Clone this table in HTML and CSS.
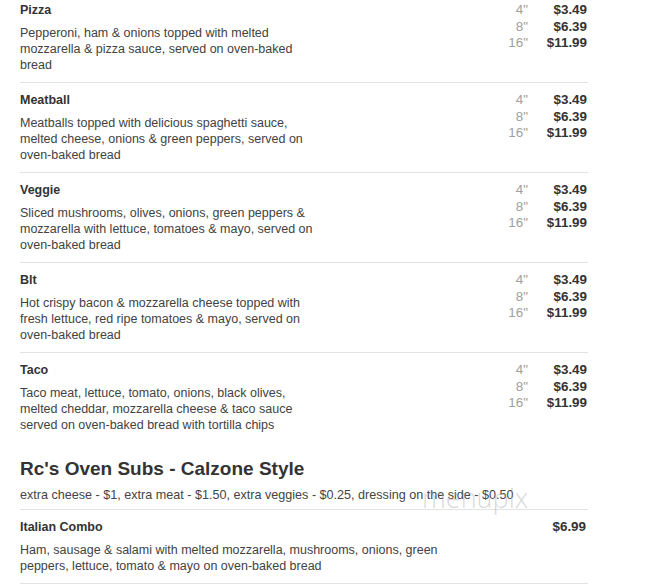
FILE: index.html
```html
<!DOCTYPE html>
<html>
<head>
<meta charset="utf-8">
<link rel="stylesheet" href="styles.css">
</head>
<body>
<div class="menu">
  <div class="list">
    <div class="item">
      <div class="info">
        <div class="name">Pizza</div>
        <div class="desc">Pepperoni, ham &amp; onions topped with melted mozzarella &amp; pizza sauce, served on oven-baked bread</div>
      </div>
      <div class="prices">
        <span class="size">4"</span><span class="price">$3.49</span>
        <span class="size">8"</span><span class="price">$6.39</span>
        <span class="size">16"</span><span class="price">$11.99</span>
      </div>
    </div>
    <div class="item">
      <div class="info">
        <div class="name">Meatball</div>
        <div class="desc">Meatballs topped with delicious spaghetti sauce, melted cheese, onions &amp; green peppers, served on oven-baked bread</div>
      </div>
      <div class="prices">
        <span class="size">4"</span><span class="price">$3.49</span>
        <span class="size">8"</span><span class="price">$6.39</span>
        <span class="size">16"</span><span class="price">$11.99</span>
      </div>
    </div>
    <div class="item">
      <div class="info">
        <div class="name">Veggie</div>
        <div class="desc">Sliced mushrooms, olives, onions, green peppers &amp; mozzarella with lettuce, tomatoes &amp; mayo, served on oven-baked bread</div>
      </div>
      <div class="prices">
        <span class="size">4"</span><span class="price">$3.49</span>
        <span class="size">8"</span><span class="price">$6.39</span>
        <span class="size">16"</span><span class="price">$11.99</span>
      </div>
    </div>
    <div class="item">
      <div class="info">
        <div class="name">Blt</div>
        <div class="desc">Hot crispy bacon &amp; mozzarella cheese topped with fresh lettuce, red ripe tomatoes &amp; mayo, served on oven-baked bread</div>
      </div>
      <div class="prices">
        <span class="size">4"</span><span class="price">$3.49</span>
        <span class="size">8"</span><span class="price">$6.39</span>
        <span class="size">16"</span><span class="price">$11.99</span>
      </div>
    </div>
    <div class="item">
      <div class="info">
        <div class="name">Taco</div>
        <div class="desc">Taco meat, lettuce, tomato, onions, black olives, melted cheddar, mozzarella cheese &amp; taco sauce served on oven-baked bread with tortilla chips</div>
      </div>
      <div class="prices">
        <span class="size">4"</span><span class="price">$3.49</span>
        <span class="size">8"</span><span class="price">$6.39</span>
        <span class="size">16"</span><span class="price">$11.99</span>
      </div>
    </div>
  </div>

  <div class="section-head">
    <h2 class="section-title">Rc's Oven Subs - Calzone Style</h2>
    <div class="section-note">extra cheese - $1, extra meat - $1.50, extra veggies - $0.25, dressing on the side - $0.50</div>
    <div class="watermark">menupix</div>
  </div>

  <div class="list">
    <div class="item single">
      <div class="info wide">
        <div class="name">Italian Combo</div>
        <div class="desc">Ham, sausage &amp; salami with melted mozzarella, mushrooms, onions, green peppers, lettuce, tomato &amp; mayo on oven-baked bread</div>
      </div>
      <div class="prices one">
        <span class="price">$6.99</span>
      </div>
    </div>
  </div>
</div>
</body>
</html>
```

FILE: styles.css
```css
html, body {
  margin: 0;
  padding: 0;
  background: #ffffff;
}

body {
  font-family: "Liberation Sans", Arial, sans-serif;
  color: #333333;
}

.menu {
  width: 568px;
  margin: -8px 0 0 20px;
}

.item {
  display: flex;
  justify-content: space-between;
  align-items: flex-start;
  padding: 9px 0 9px;
  border-top: 1px solid #e3e3e3;
}

.single {
  border-top: none;
  border-bottom: 1px solid #e3e3e3;
  padding: 9px 0 9px;
}

.info {
  width: 296px;
}

.info.wide {
  width: 445px;
}

.name {
  font-size: 12.5px;
  font-weight: bold;
  line-height: 16px;
  color: #333333;
}

.desc {
  margin-top: 7px;
  font-size: 12.5px;
  line-height: 16px;
  color: #424242;
}

.prices {
  display: grid;
  grid-template-columns: auto 59px;
  font-size: 13.4px;
  line-height: 16.5px;
  margin-right: 1px;
}

.prices.one {
  grid-template-columns: auto;
  line-height: 16px;
  margin-right: 2px;
}

.size {
  text-align: right;
  color: #a0a0a0;
}

.price {
  text-align: right;
  font-weight: bold;
  color: #333333;
}

.section-head {
  position: relative;
  padding: 16px 0 6px;
  border-bottom: 1px solid #e3e3e3;
}

.section-title {
  margin: 0;
  font-size: 19px;
  line-height: 22px;
  font-weight: bold;
  color: #333333;
}

.section-note {
  margin-top: 7px;
  font-size: 12.6px;
  line-height: 16px;
  color: #444444;
}

.watermark {
  position: absolute;
  left: 402px;
  top: 41px;
  font-family: "Open Sans", sans-serif;
  font-weight: 300;
  font-size: 27px;
  line-height: 30px;
  color: rgba(170, 170, 170, 0.45);
  pointer-events: none;
}
```
